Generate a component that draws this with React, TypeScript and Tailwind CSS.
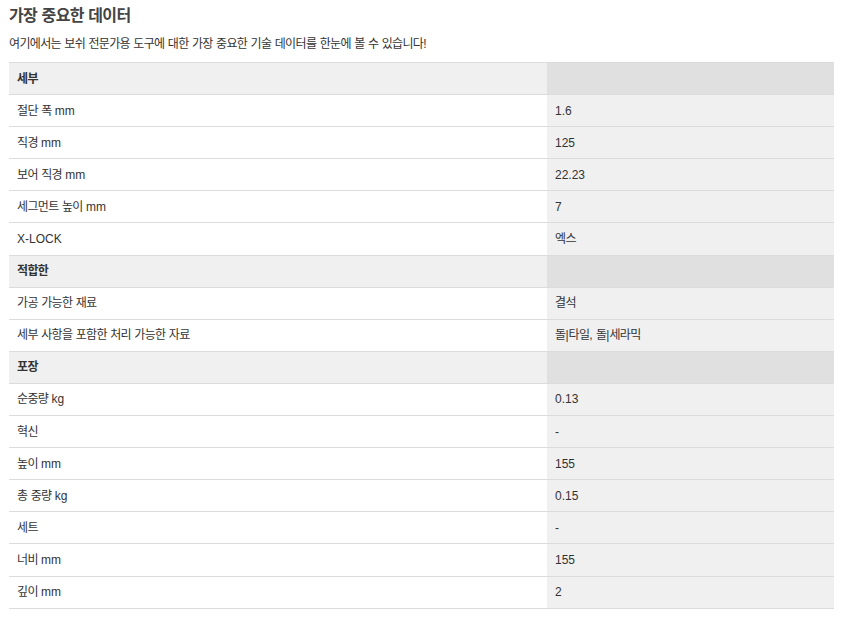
type Row = { label: string; value?: string; head?: boolean };

const rows: Row[] = [
  { label: '세부', head: true },
  { label: '절단 폭 mm', value: '1.6' },
  { label: '직경 mm', value: '125' },
  { label: '보어 직경 mm', value: '22.23' },
  { label: '세그먼트 높이 mm', value: '7' },
  { label: 'X-LOCK', value: '엑스' },
  { label: '적합한', head: true },
  { label: '가공 가능한 재료', value: '결석' },
  { label: '세부 사항을 포함한 처리 가능한 자료', value: '돌|타일, 돌|세라믹' },
  { label: '포장', head: true },
  { label: '순중량 kg', value: '0.13' },
  { label: '혁신', value: '-' },
  { label: '높이 mm', value: '155' },
  { label: '총 중량 kg', value: '0.15' },
  { label: '세트', value: '-' },
  { label: '너비 mm', value: '155' },
  { label: '깊이 mm', value: '2' },
];

// hangul runs render a bit narrower in the original font, tighten them only
const Ko = ({ text }: { text?: string }) => (
  <>
    {(text ?? '').split(/([\uAC00-\uD7A3]+)/).map((part, i) =>
      /[\uAC00-\uD7A3]/.test(part) ? (
        <span key={i} className="tracking-[-0.65px]">
          {part}
        </span>
      ) : (
        part
      )
    )}
  </>
);

export default function App() {
  return (
    <div
      className="min-h-screen bg-white px-[9px] pt-[5px] text-[#333]"
      style={{ fontFamily: '"Liberation Sans", "Noto Sans CJK KR", sans-serif' }}
    >
      <h2 className="text-[16px] font-bold leading-[22px] text-[#444]">
        <Ko text="가장 중요한 데이터" />
      </h2>
      <p className="mt-[9px] whitespace-pre text-[12px] leading-[16px]">
        <Ko text="여기에서는 보쉬 전문가용 도구에 대한 가장 중요한 기술 데이터를 한눈에 볼 수 있습니다!" />
      </p>

      {/* Spec table */}
      <div className="mt-[10px] w-[825px] border-t border-[#dcdcdc]">
        {rows.map((row, i) => (
          <div key={i} className="flex h-[32.1px] border-b border-[#dcdcdc] text-[12px]">
            <div
              className={
                row.head
                  ? 'flex w-[538px] items-center bg-[#f0f0f0] px-[8px] font-bold'
                  : 'flex w-[538px] items-center bg-white px-[8px]'
              }
            >
              <span>
                <Ko text={row.label} />
              </span>
            </div>
            <div
              className={
                row.head
                  ? 'flex flex-1 items-center bg-[#e0e0e1] px-[8px]'
                  : 'flex flex-1 items-center bg-[#f0f0f0] px-[8px]'
              }
            >
              <span>
                <Ko text={row.value} />
              </span>
            </div>
          </div>
        ))}
      </div>
    </div>
  );
}
